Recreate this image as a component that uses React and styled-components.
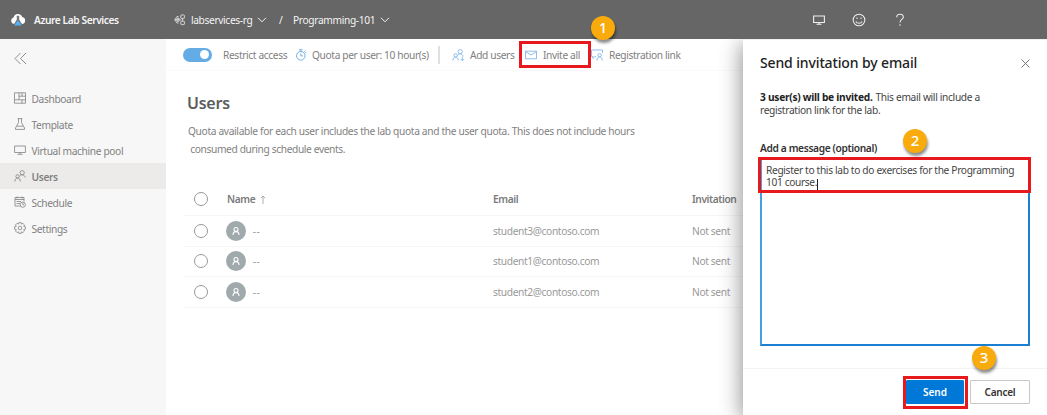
import React from "react";
import styled, { createGlobalStyle } from "styled-components";

const Global = createGlobalStyle`
  * { box-sizing: border-box; }
  body { margin: 0; font-family: "Noto Sans", "Open Sans", sans-serif; overflow: hidden; background: #fff; }
  button, textarea { font-family: inherit; }
`;

const Label = styled.span`
  font-size: ${(p) => p.$size || 10.2}px;
  font-weight: ${(p) => p.$weight || 400};
  color: ${(p) => p.$color || "inherit"};
  letter-spacing: ${(p) => p.$track ?? -0.36}px;
  line-height: 14px;
  white-space: nowrap;
`;

const Page = styled.div`
  width: 1047px;
  height: 415px;
  display: flex;
  flex-direction: column;
  overflow: hidden;
`;

const Header = styled.header`
  flex: 0 0 39px;
  background: #666;
  color: #f4f4f4;
  display: flex;
  align-items: center;
  padding-left: 10px;
  position: relative;
`;
const Brand = styled.div`
  width: 164px;
  display: flex;
  align-items: center;
  gap: 8px;
`;
const Crumb = styled.div`
  display: flex;
  align-items: center;
  width: ${(p) => p.$w}px;
  gap: ${(p) => p.$gap || 0}px;
`;
const HeaderActions = styled.div`
  margin-left: auto;
  width: 234px;
  display: flex;
  align-items: center;
  gap: 27px;
`;

const Body = styled.div`
  flex: 1;
  display: flex;
  min-height: 0;
`;
const Sidebar = styled.nav`
  flex: 0 0 166px;
  background: #f7f7f7;
  color: #818181;
`;
const Collapse = styled.div`
  height: 46px;
  padding: 9px 0 0 14px;
`;
const NavItem = styled.div`
  height: 26px;
  display: flex;
  align-items: center;
  gap: 5.5px;
  padding: 1px 0 0 14px;
  background: ${(p) => (p.$active ? "#edebea" : "transparent")};
  & > svg { margin-top: -1px; }
`;

const Main = styled.main`
  flex: 0 0 577px;
  min-width: 0;
  background: #fff;
`;
const Toolbar = styled.div`
  height: 32px;
  border-bottom: 1px solid #fafafa;
  display: flex;
  align-items: center;
  padding-left: 17px;
  color: #808080;
`;
const Toggle = styled.div`
  width: 29px;
  height: 14px;
  border-radius: 7px;
  background: #64ace5;
  display: flex;
  align-items: center;
  justify-content: flex-end;
  padding-right: 3px;
  margin-right: 11px;
  &::after { content: ""; width: 9px; height: 9px; border-radius: 50%; background: #fff; }
`;
const ToolItem = styled.div`
  position: relative;
  display: flex;
  align-items: center;
  gap: ${(p) => p.$gap || 5}px;
  width: ${(p) => p.$w}px;
`;
const Divider = styled.div`
  width: 2px;
  height: 18px;
  background: #e0e0e0;
  margin-right: 12px;
`;
const Intro = styled.section`
  padding: 21px 0 0 22px;
  height: 112px;
`;
const Heading = styled.h1`
  margin: 0 0 0 -1px;
  font-size: 16px;
  font-weight: 600;
  letter-spacing: -0.25px;
  line-height: 22px;
  color: #5c5c5c;
`;
const Line = styled.div`
  height: 18px;
  display: flex;
  align-items: center;
  color: #818181;
  &:first-of-type { margin-top: 8px; }
`;
const Row = styled.div`
  margin-left: 18px;
  height: ${(p) => p.$h || 30.6}px;
  border-bottom: 1px solid #f6f6f6;
  display: grid;
  grid-template-columns: 41px 268px 199px 1fr;
  align-items: center;
  color: #999;
`;
const Radio = styled.div`
  width: 14px;
  height: 14px;
  margin-left: 10px;
  border: 1px solid #999;
  border-radius: 50%;
`;
const NameCell = styled.div`
  display: flex;
  align-items: center;
  gap: ${(p) => p.$gap || 7}px;
  padding-left: ${(p) => p.$inset || 0}px;
`;
const Avatar = styled.div`
  width: 20px;
  height: 20px;
  border-radius: 50%;
  background: #a0aaad;
  display: flex;
  align-items: center;
  justify-content: center;
`;

const Panel = styled.aside`
  flex: 0 0 304px;
  background: #fff;
  position: relative;
  border-top: 1px solid #f0f0f0;
  box-shadow: -2px 4px 20px rgba(0, 0, 0, 0.42);
  display: flex;
  flex-direction: column;
  clip-path: inset(0 0 0 -40px);
`;
const PanelBody = styled.div`
  height: 329px;
  padding: 13px 17px 0;
  border-bottom: 1px solid #f3f3f3;
`;
const PanelTitle = styled.div`
  display: flex;
  align-items: center;
  justify-content: space-between;
  height: 20px;
`;
const Notice = styled.div`
  margin-top: 17px;
  display: flex;
  flex-direction: column;
  color: #444;
`;
const NoticeLine = styled.div`
  height: 13px;
  display: flex;
  align-items: center;
  gap: 3px;
`;
const FieldLabel = styled.div`
  margin-top: 25px;
  height: 14px;
  display: flex;
  align-items: center;
  position: relative;
`;
const Field = styled.div`
  margin-top: 3px;
  width: 270px;
  height: 188px;
  border: 2px solid #1a7fd0;
  border-left-color: #459fe3;
  padding: 4px 4px;
  position: relative;
  color: #444;
  display: flex;
  flex-direction: column;
  & > span { line-height: 12px; height: 12px; }
`;
const Caret = styled.i`
  display: inline-block;
  width: 1px;
  height: 12px;
  margin: -2px 0 -2px;
  background: #222;
  vertical-align: -3px;
`;
const Footer = styled.div`
  flex: 1;
  display: flex;
  justify-content: flex-end;
  gap: 6px;
  padding: 11px 17px 0 0;
`;
const Button = styled.button`
  position: relative;
  height: 24px;
  width: ${(p) => (p.$primary ? 58 : 60)}px;
  padding: 0 0 2px;
  border-radius: 1px;
  border: 1px solid ${(p) => (p.$primary ? "#0078d7" : "#c8c8c8")};
  background: ${(p) => (p.$primary ? "#0078d7" : "#fff")};
  color: ${(p) => (p.$primary ? "#fff" : "#333")};
`;

const Highlight = styled.div`
  position: absolute;
  left: ${(p) => p.$x}px;
  top: ${(p) => p.$y}px;
  width: ${(p) => p.$w}px;
  height: ${(p) => p.$h}px;
  border: 3px solid #e8191c;
`;
const Step = styled.div`
  position: absolute;
  left: ${(p) => p.$x}px;
  top: ${(p) => p.$y}px;
  width: 24px;
  height: 24px;
  border-radius: 50%;
  background: #f8ab0b;
  color: #fff;
  font-size: 15px;
  font-weight: 500;
  line-height: 23px;
  text-align: center;
  box-shadow: 1px 3px 3px rgba(0, 0, 0, 0.45);
  z-index: 5;
`;

const Svg = ({ s = 12, w = s, h = s, vb = "0 0 12 12", c = "currentColor", sw = 0.8, children }) => (
  <svg width={w} height={h} viewBox={vb} fill="none" stroke={c} strokeWidth={sw}>
    {children}
  </svg>
);
const Chevron = () => (
  <Svg w={10} h={6} vb="0 0 10 6" sw={1}><path d="M1 .8l4 4 4-4" /></Svg>
);
const Monitor = ({ sw, h = 12, c }) => (
  <Svg sw={sw} h={h} c={c}><path d="M.6 2h10.800v6.500H.6zM6 8.500v1.700M3.500 10.300h5" /></Svg>
);
const People = ({ c, add }) => (
  <Svg c={c} w={add ? 13 : 12} h={12} vb={add ? "0 0 13 12" : "0 0 12 12"}>
    <circle cx="3.600" cy="6.400" r="1.700" />
    <circle cx="8.200" cy="2.700" r="2.100" />
    <path d="M.9 11.500c0-2.200 1.100-3.400 2.700-3.400s2.700 1.200 2.700 3.400M5.800 6.300c.5-1 1.300-1.500 2.400-1.500 1.600 0 2.700 1.100 2.900 2.700" />
    {add && <path d="M10.300 7.600v4M8.600 9.900l1.700 1.700 1.700-1.700" />}
  </Svg>
);

const icons = {
  dashboard: <Svg><path d="M.5.8h11v10.400H.5zM5 .8v7M.5 7.800h11M8 .8v3.400M5 4.200h6.500M8 7.800v3.400" /></Svg>,
  template: <Svg><path d="M3.600.6h4.800M4.500.6v4L1.500 10v1.400h9V10l-3-5.400v-4M2.800 8.200h6.400" /></Svg>,
  pool: <Monitor />,
  users: <People />,
  schedule: (
    <Svg>
      <path d="M6.500 10H1V1.500h9v4M1 3.500h9M3 .5v2M8 .5v2M2.500 5.500h4.500M2.500 7.500h3.500" />
      <circle cx="8.800" cy="8.700" r="2.600" /><path d="M8.800 7.200v1.600h1.300" />
    </Svg>
  ),
  settings: (
    <Svg>
      <circle cx="6" cy="6" r="1.800" />
      <path d="M4.900.6h2.200l.4 1.500 1.300-.8 1.700 1.600-.8 1.400 1.700.5v2.300l-1.700.5.8 1.400-1.600 1.600-1.400-.8-.4 1.600H4.900l-.4-1.600-1.400.8-1.600-1.600.8-1.400-1.700-.5V4.800l1.700-.5-.8-1.400 1.600-1.600 1.400.8z" />
    </Svg>
  ),
};
const nav = [
  ["dashboard", "Dashboard"],
  ["template", "Template"],
  ["pool", "Virtual machine pool"],
  ["users", "Users"],
  ["schedule", "Schedule"],
  ["settings", "Settings"],
];
const BLUE = "#74b0e4";

export default function App() {
  return (
    <Page>
      <Global />
      <Header>
        <Brand>
          <svg width="16" height="14" viewBox="0 0 16 14">
            <path d="M4 11a3.400 3.400 0 0 1-.5-6.600A4.600 4.600 0 0 1 12.200 4 3.600 3.600 0 0 1 12.500 11z" fill="#fff" />
            <path d="M6.600 3.200h2.800M7.200 3.200v3.300L4.500 11h7L8.800 6.500V3.200" fill="#666" stroke="#666" strokeWidth=".6" />
            <path d="M8 7l4 5.500H4z" fill="#59aef0" />
          </svg>
          <Label $weight={600} $track={-0.42}>Azure Lab Services</Label>
        </Brand>
        <Crumb $w={105} $gap={5}>
          <Svg c="#e0e0e0" sw={0.9}>
            <path d="M4.500 2.500H3L.8 5.800 3 9h1.500M.8 5.800H7" />
            <rect x="6.800" y="1" width="3.600" height="3.400" rx=".6" />
            <rect x="6.800" y="7.200" width="3.600" height="3.400" rx=".6" />
            <path d="M3 4.200h2v3H3zM8.600 4.400v2.800" />
          </Svg>
          <Label>labservices-rg</Label>
          <Chevron />
        </Crumb>
        <Crumb $w={14}><Label>/</Label></Crumb>
        <Crumb $w={110} $gap={5}>
          <Label $track={-0.34}>Programming-101</Label>
          <Chevron />
        </Crumb>
        <HeaderActions>
          <Monitor sw={1.1} c="#eee" />
          <Svg s={14} vb="0 0 12 12" sw={0.9} c="#eee">
            <circle cx="6" cy="6" r="5" /><path d="M3.300 7.200C4.300 9.300 7.700 9.300 8.700 7.200M4.300 3.800v1.300M7.700 3.800v1.300" />
          </Svg>
          <Svg s={14} vb="0 0 14 14" sw={1.1} c="#eee">
            <path d="M3.700 4.200C3.700 2.200 5 1.200 7 1.200s3.300 1 3.300 2.800C10.300 6.500 7 6.300 7 9.500M7 11.300v1.400" />
          </Svg>
        </HeaderActions>
        <Step $x={591} $y={16}>1</Step>
      </Header>
      <Body>
        <Sidebar>
          <Collapse>
            <Svg s={13} vb="0 0 13 13" sw={0.9}><path d="M6.500 1L1 6.500 6.500 12M12 1L6.500 6.500 12 12" /></Svg>
          </Collapse>
          {nav.map(([id, text]) => (
            <NavItem key={id} $active={id === "users"}>
              {icons[id]}
              <Label $weight={id === "users" ? 600 : 400}>{text}</Label>
            </NavItem>
          ))}
        </Sidebar>
        <Main>
          <Toolbar>
            <Toggle />
            <ToolItem $w={72}><Label>Restrict access</Label></ToolItem>
            <ToolItem $w={143}>
              <Svg c={BLUE} sw={1}>
                <circle cx="5.800" cy="6.800" r="4.300" /><path d="M4 .8h3.600M5.800 1v1.500M9 2.800l1.200-1.200M5.800 4.400v2.500h2.300" />
                <path d="M10.300 3.200l1 1" />
              </Svg>
              <Label>Quota per user: 10 hour(s)</Label>
            </ToolItem>
            <Divider />
            <ToolItem $w={73}><People c={BLUE} add /><Label>Add users</Label></ToolItem>
            <ToolItem $w={66} $gap={6}>
              <Svg c={BLUE}><path d="M.5 2.200h11v7.600H.5zM.5 2.600L6 6l5.500-3.400" /></Svg>
              <Label>Invite all</Label>
              <Highlight $x={-6} $y={-7} $w={72} $h={27} />
            </ToolItem>
            <ToolItem $w={100} $gap={6}>
              <Svg c={BLUE}>
                <path d="M5 7.500H3.800L2 9.500v-2H.5V1h11v3" /><circle cx="8.600" cy="6.200" r="1.700" />
                <path d="M5.900 11.500c0-2.200 1.100-3.400 2.700-3.400s2.700 1.200 2.700 3.400" />
              </Svg>
              <Label>Registration link</Label>
            </ToolItem>
          </Toolbar>
          <Intro>
            <Heading>Users</Heading>
            <Line><Label $track={-0.335}>Quota available for each user includes the lab quota and the user quota. This does not include hours</Label></Line>
            <Line><Label $track={-0.37}>&nbsp;consumed during schedule events.</Label></Line>
          </Intro>
          <Row $h={33}>
            <Radio />
            <NameCell $gap={5} $inset={2}>
              <Label $weight={600} $color="#7b7b7b">Name</Label>
              <Svg w={6} h={9} vb="0 0 6 9" c="#999"><path d="M3 9V1M.8 3.200L3 1l2.200 2.200" /></Svg>
            </NameCell>
            <Label $weight={600} $color="#7b7b7b">Email</Label>
            <Label $weight={600} $color="#7b7b7b" $track={-0.42}>Invitation</Label>
          </Row>
          {[3, 1, 2].map((n) => (
            <Row key={n}>
              <Radio />
              <NameCell $inset={0.7}>
                <Avatar>
                  <Svg s={10} vb="0 0 10 10" c="#fff" sw={1.1}><circle cx="5" cy="3.500" r="2" /><path d="M2 9c0-2.200 1.200-3.400 3-3.400S8 6.800 8 9" /></Svg>
                </Avatar>
                <Label $track={0.5}>--</Label>
              </NameCell>
              <Label>{`student${n}@contoso.com`}</Label>
              <Label>Not sent</Label>
            </Row>
          ))}
        </Main>
        <Panel>
          <PanelBody>
            <PanelTitle>
              <Label $size={14} $weight={500} $color="#222" $track={-0.13}>Send invitation by email</Label>
              <Svg s={9} vb="0 0 9 9" c="#666" sw={0.9}><path d="M.5.5l8 8M8.500.5l-8 8" /></Svg>
            </PanelTitle>
            <Notice>
              <NoticeLine>
                <Label $weight={700} $color="#222" $track={-0.27}>3 user(s) will be invited.</Label>
                <Label $track={-0.33}>This email will include a</Label>
              </NoticeLine>
              <NoticeLine><Label $track={-0.33}>registration link for the lab.</Label></NoticeLine>
            </Notice>
            <FieldLabel>
              <Label $weight={600} $color="#333">Add a message (optional)</Label>
              <Step $x={143} $y={-12}>2</Step>
            </FieldLabel>
            <Field>
              <Label $track={-0.34}>Register to this lab to do exercises for the Programming</Label>
              <Label $track={-0.36}>101 course.<Caret /></Label>
              <Highlight $x={-4} $y={-3} $w={273} $h={36} />
            </Field>
          </PanelBody>
          <Footer>
            <Button $primary>
              <Label $size={10} $weight={600} $track={-0.05}>Send</Label>
              <Highlight $x={-4} $y={-5} $w={65} $h={33} />
            </Button>
            <Button><Label $size={10} $weight={600} $track={-0.25}>Cancel</Label></Button>
          </Footer>
          <Step $x={229} $y={306}>3</Step>
        </Panel>
      </Body>
    </Page>
  );
}
